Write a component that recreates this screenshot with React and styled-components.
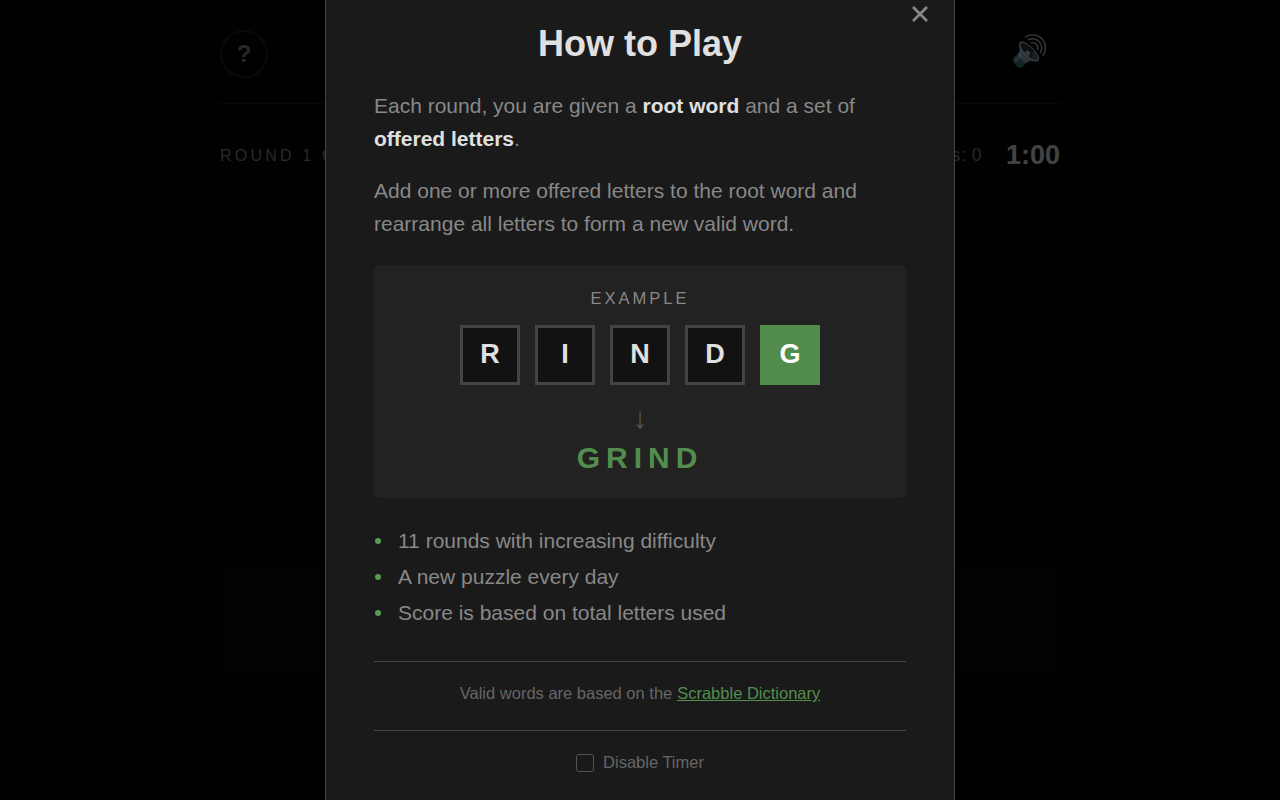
import styled, { createGlobalStyle } from "styled-components";

const GlobalStyle = createGlobalStyle`
  * {
    box-sizing: border-box;
  }
  html, body {
    margin: 0;
    height: 100%;
    background: #050505;
    font-family: "Liberation Sans", Arial, sans-serif;
    overflow: hidden;
  }
`;

const Page = styled.div`
  width: 840px;
  margin: 0 auto;
  padding-top: 30px;
  height: 800px;
  display: flex;
  flex-direction: column;
  color: #e0e0e0;
`;

const Header = styled.header`
  display: flex;
  justify-content: space-between;
  padding-bottom: 25px;
  border-bottom: 1px solid #222;
`;

const HelpButton = styled.button`
  width: 48px;
  height: 48px;
  border-radius: 50%;
  border: 2px solid #222;
  background: transparent;
  color: #888;
  font: bold 24px "Liberation Sans", Arial, sans-serif;
`;

const SoundIcon = styled.span`
  font-size: 30px;
  line-height: 42px;
  margin-right: 12px;
  font-family: "DejaVu Sans", sans-serif;
`;

const Stats = styled.div`
  display: flex;
  justify-content: space-between;
  align-items: center;
  margin-top: 36px;
`;

const RoundLabel = styled.span`
  font-size: 16px;
  letter-spacing: 3.2px;
  color: #888;
`;

const StatsRight = styled.div`
  display: flex;
  align-items: center;
  gap: 24px;
`;

const Score = styled.span`
  font-size: 17.6px;
  letter-spacing: 0.5px;
  color: #888;
`;

const Timer = styled.span`
  font-size: 27px;
  font-weight: 700;
`;

const Panel = styled.div`
  height: 110px;
  margin-top: 394px;
  background: #090909;
  border-radius: 8px;
`;

const Overlay = styled.div`
  position: fixed;
  inset: 0;
  background: rgba(0, 0, 0, 0.7);
  display: flex;
  justify-content: center;
  overflow: hidden;
`;

const Modal = styled.section`
  position: relative;
  flex: none;
  width: 630px;
  height: 860px;
  padding: 21px 48px 0;
  background: #1a1a1a;
  border: 1px solid #444;
  border-width: 0 1px;
`;

const CloseButton = styled.button`
  position: absolute;
  top: 6px;
  right: 26px;
  width: 16px;
  height: 16px;
  padding: 0;
  border: none;
  background: none;
  color: #888;
  display: flex;
`;

const Title = styled.h2`
  margin: 0 0 22px;
  font-size: 36px;
  line-height: 46px;
  font-weight: 700;
  text-align: center;
  color: #e0e0e0;
`;

const Text = styled.p`
  margin: 0 0 18px;
  font-size: 21px;
  line-height: 33.28px;
  color: #888;

  strong {
    color: #e0e0e0;
  }
`;

const ExampleBox = styled.div`
  margin-top: 25px;
  height: 233px;
  padding-top: 24px;
  background: #222;
  border-radius: 6px;
  text-align: center;
`;

const ExampleLabel = styled.div`
  font-size: 16.5px;
  line-height: 18px;
  letter-spacing: 3px;
  color: #888;
`;

const Tiles = styled.div`
  display: flex;
  justify-content: center;
  gap: 15px;
  margin-top: 18px;
`;

const Tile = styled.div`
  width: 60px;
  height: 60px;
  display: flex;
  align-items: center;
  justify-content: center;
  padding-bottom: 2px;
  font-size: 27px;
  font-weight: 700;
  color: ${(p) => (p.$added ? "#fff" : "#e0e0e0")};
  background: ${(p) => (p.$added ? "#538d4e" : "#121212")};
  border: ${(p) => (p.$added ? "none" : "3px solid #444")};
`;

const Arrow = styled.div`
  margin-top: 16px;
  font-size: 30px;
  line-height: 34px;
  color: #555;
`;

const Answer = styled.div`
  font-size: 30px;
  line-height: 38px;
  margin-top: 4px;
  font-weight: 700;
  letter-spacing: 6px;
  color: #538d4e;
`;

const Rules = styled.ul`
  list-style: none;
  margin: 25px 0 30px;
  padding: 0;
`;

const Rule = styled.li`
  position: relative;
  padding-left: 24px;
  font-size: 21px;
  line-height: 36px;
  color: #888;

  &::before {
    content: "";
    position: absolute;
    left: 1px;
    top: 15px;
    width: 6px;
    height: 6px;
    border-radius: 50%;
    background: #5a9a54;
  }
`;

const Credit = styled.div`
  border-top: 1px solid #444;
  border-bottom: 1px solid #444;
  height: 70px;
  padding-bottom: 5px;
  display: flex;
  align-items: center;
  justify-content: center;
  gap: 0.3em;
  font-size: 16.5px;
  color: #666;

  a {
    color: #538d4e;
    text-decoration: underline;
  }
`;

const TimerOption = styled.label`
  display: flex;
  align-items: center;
  justify-content: center;
  gap: 9px;
  margin-top: 22px;
  font-size: 16.5px;
  color: #666;
`;

const Checkbox = styled.span`
  width: 18px;
  height: 18px;
  border: 1px solid #555;
  border-radius: 3px;
`;

const App = () => {
  return (
    <>
      <GlobalStyle />
      <Page>
        <Header>
          <HelpButton>?</HelpButton>
          <SoundIcon>🔊</SoundIcon>
        </Header>
        <Stats>
          <RoundLabel>ROUND 1 OF 11</RoundLabel>
          <StatsRight>
            <Score>Words: 0</Score>
            <Timer>1:00</Timer>
          </StatsRight>
        </Stats>
        <Panel />
      </Page>
      <Overlay>
        <Modal>
          <CloseButton aria-label="Close">
            <svg width="16" height="16" viewBox="0 0 16 16" fill="none">
              <path d="M1 1 15 15M15 1 1 15" stroke="currentColor" strokeWidth="2.6" />
            </svg>
          </CloseButton>
          <Title>How to Play</Title>
          <Text>
            Each round, you are given a <strong>root word</strong> and a set of{" "}
            <strong>offered letters</strong>.
          </Text>
          <Text>
            Add one or more offered letters to the root word and rearrange all
            letters to form a new valid word.
          </Text>
          <ExampleBox>
            <ExampleLabel>EXAMPLE</ExampleLabel>
            <Tiles>
              {["R", "I", "N", "D"].map((letter) => (
                <Tile key={letter}>{letter}</Tile>
              ))}
              <Tile $added>G</Tile>
            </Tiles>
            <Arrow>↓</Arrow>
            <Answer>GRIND</Answer>
          </ExampleBox>
          <Rules>
            <Rule>11 rounds with increasing difficulty</Rule>
            <Rule>A new puzzle every day</Rule>
            <Rule>Score is based on total letters used</Rule>
          </Rules>
          <Credit>
            Valid words are based on the
            <a href="#dictionary">Scrabble Dictionary</a>
          </Credit>
          <TimerOption>
            <Checkbox />
            Disable Timer
          </TimerOption>
        </Modal>
      </Overlay>
    </>
  );
};

export default App;
